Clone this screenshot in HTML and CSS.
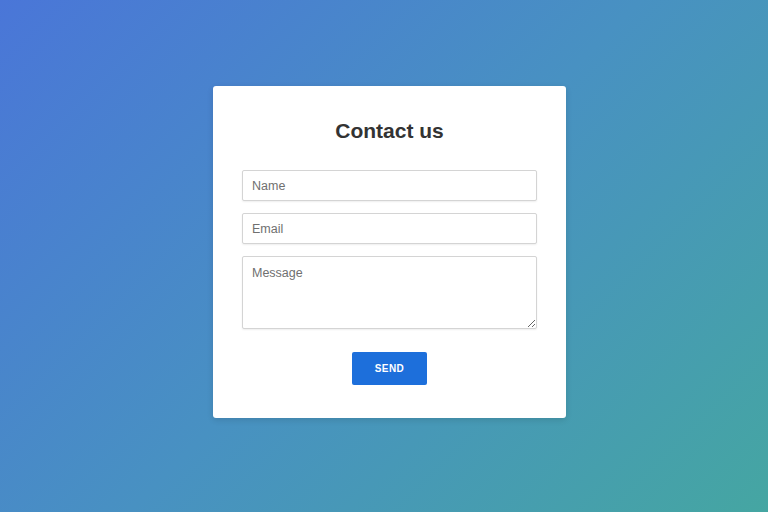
FILE: index.html
```html
<!DOCTYPE html>
<html>
<head>
<meta charset="utf-8">
<link rel="stylesheet" href="styles.css">
</head>
<body>
<div class="page">
  <form class="card">
    <h1 class="title">Contact us</h1>
    <input class="field" type="text" placeholder="Name">
    <input class="field" type="text" placeholder="Email">
    <textarea class="field area" placeholder="Message"></textarea>
    <div class="actions">
      <button class="send" type="button">SEND</button>
    </div>
  </form>
</div>
</body>
</html>
```

FILE: styles.css
```css
html, body {
  margin: 0;
  padding: 0;
  height: 100%;
}
body {
  background: linear-gradient(135deg, #4a76d8 0%, #4891c2 50%, #45a6a2 100%);
  font-family: "Liberation Sans", Arial, sans-serif;
}
.page {
  display: flex;
  padding: 86px 0 0 213px;
}
.card {
  box-sizing: border-box;
  width: 353px;
  height: 332px;
  background: #fff;
  border-radius: 3px;
  padding: 33px 29px 0 29px;
  display: flex;
  flex-direction: column;
  box-shadow: 0 2px 6px rgba(0,0,0,0.12);
}
.title {
  margin: 0 0 27px 0;
  font-size: 21px;
  line-height: 24px;
  font-weight: bold;
  color: #333;
  text-align: center;
}
.field {
  box-sizing: border-box;
  width: 295px;
  height: 31px;
  border: 1px solid #d4d4d4;
  border-radius: 2px;
  padding: 0 9px;
  font-family: "Liberation Sans", Arial, sans-serif;
  font-size: 12.5px;
  color: #333;
  margin: 0 0 12px 0;
  box-shadow: 0 1px 2px rgba(0,0,0,0.07);
  outline: none;
}
.field::placeholder {
  color: #707070;
}
.area {
  height: 73px;
  padding-top: 9px;
  resize: vertical;
  margin-bottom: 23px;
  display: block;
}
.actions {
  display: flex;
  justify-content: center;
}
.send {
  width: 75px;
  height: 33px;
  border: none;
  border-radius: 2px;
  background: #1d6fdb;
  color: #fff;
  font-family: "Liberation Sans", Arial, sans-serif;
  font-size: 10px;
  font-weight: bold;
  letter-spacing: 0.4px;
  cursor: pointer;
}
```
